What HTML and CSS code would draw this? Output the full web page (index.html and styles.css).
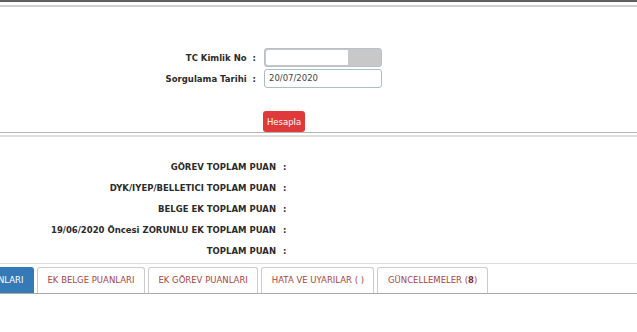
FILE: index.html
```html
<!DOCTYPE html>
<html>
<head>
    <meta charset="utf-8">
    <title>Puan Hesaplama</title>
    <link rel="stylesheet" href="styles.css">
</head>
<body>
    <div class="topline"></div>

    <div class="query">
        <div class="query-row">
            <label class="query-label">TC Kimlik No<span class="colon">:</span></label>
            <div class="field field-tc"><span class="field-fill"></span></div>
        </div>
        <div class="query-row">
            <label class="query-label">Sorgulama Tarihi<span class="colon">:</span></label>
            <div class="field">20/07/2020</div>
        </div>
        <div class="query-action">
            <button class="btn-red">Hesapla</button>
        </div>
    </div>

    <div class="totals">
        <div class="total-row"><span class="total-label">GÖREV TOPLAM PUAN</span><span class="colon">:</span></div>
        <div class="total-row"><span class="total-label">DYK/IYEP/BELLETICI TOPLAM PUAN</span><span class="colon">:</span></div>
        <div class="total-row"><span class="total-label">BELGE EK TOPLAM PUAN</span><span class="colon">:</span></div>
        <div class="total-row"><span class="total-label">19/06/2020 Öncesi ZORUNLU EK TOPLAM PUAN</span><span class="colon">:</span></div>
        <div class="total-row"><span class="total-label">TOPLAM PUAN</span><span class="colon">:</span></div>
    </div>

    <div class="tabs">
        <ul class="tab-list">
            <li class="tab active">HİZMET PUANLARI</li>
            <li class="tab">EK BELGE PUANLARI</li>
            <li class="tab">EK GÖREV PUANLARI</li>
            <li class="tab">HATA VE UYARILAR ( )</li>
            <li class="tab">GÜNCELLEMELER (<b>8</b>)</li>
        </ul>
        <div class="tab-body"></div>
    </div>
</body>
</html>
```
FILE: styles.css
```css
* {
    box-sizing: border-box;
}

html, body {
    margin: 0;
    padding: 0;
    background-color: #ffffff;
    font-family: "DejaVu Sans", Verdana, sans-serif;
    color: #2b2b2b;
    overflow: hidden;
}

.topline {
    height: 7px;
    border-top: 2px solid #5e5e5e;
    border-bottom: 2px solid #cfcfcf;
}

.query {
    padding-top: 41px;
    border-bottom: 1px solid #b5b5b5;
}

.query-row {
    display: flex;
    align-items: center;
    margin-bottom: 2px;
}

.query-label {
    width: 256px;
    text-align: right;
    font-size: 8.5px;
    font-weight: bold;
}

.query-label .colon {
    margin-left: 6px;
}

.field {
    margin-left: 8px;
    width: 118px;
    height: 19px;
    border: 1px solid #a9bfc6;
    border-radius: 3px;
    font-size: 8.5px;
    line-height: 17px;
    padding-left: 4px;
    color: #444444;
}

.field-tc {
    background-color: #c8c8c8;
    padding: 1px;
    border-color: #b8c2c6;
}

.field-fill {
    display: block;
    width: 82px;
    height: 15px;
    background-color: #ffffff;
    border-radius: 2px 0 0 2px;
}

.query-action {
    padding-top: 21px;
    padding-left: 263px;
    height: 42px;
}

.btn-red {
    display: block;
    width: 42px;
    height: 21px;
    padding: 0;
    border: none;
    border-radius: 3px;
    background-color: #e0393b;
    color: #ffffff;
    font-family: "DejaVu Sans", Verdana, sans-serif;
    font-size: 8.5px;
}

.totals {
    border-top: 2px solid #dedede;
    margin-top: 2px;
    padding-top: 19px;
    padding-bottom: 2px;
}

.total-row {
    display: flex;
    height: 21px;
    align-items: center;
}

.total-label {
    width: 276px;
    text-align: right;
    font-size: 8.5px;
    font-weight: bold;
}

.total-row .colon {
    margin-left: 7px;
    font-size: 8.5px;
    font-weight: bold;
}

.tabs {
    border-top: 1px solid #dcdcdc;
    padding-top: 3px;
}

.tab-list {
    list-style-type: none;
    margin: 0 0 0 -65px;
    padding: 0;
    display: flex;
    gap: 3px;
    border-bottom: 1px solid #aaaaaa;
}

.tab {
    height: 26px;
    line-height: 25px;
    padding: 0 9.5px;
    border: 1px solid #cccccc;
    border-bottom: none;
    border-radius: 3px 3px 0 0;
    font-size: 8.5px;
    color: #a94442;
    white-space: nowrap;
}

.tab b {
    color: #8a2a2a;
}

.tab.active {
    background-color: #337ab7;
    border-color: #337ab7;
    color: #ffffff;
}

.tab-body {
    height: 39px;
    border-bottom: 1px solid #aaaaaa;
}
```
